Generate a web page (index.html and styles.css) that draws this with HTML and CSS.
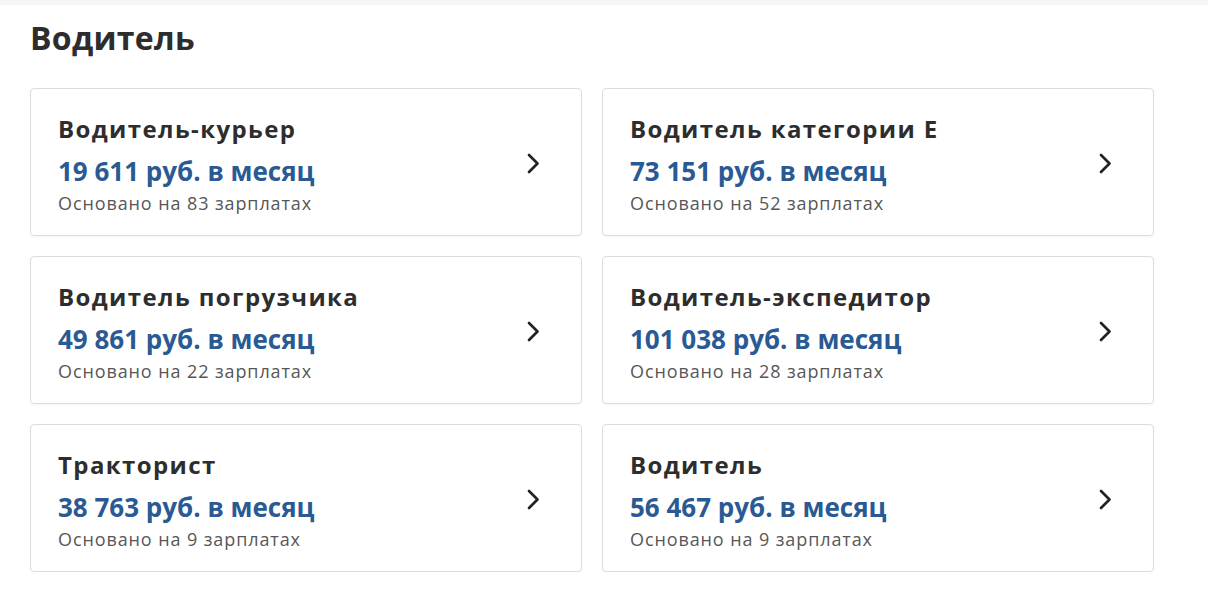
FILE: index.html
```html
<!DOCTYPE html>
<html lang="ru">
<head>
    <meta charset="UTF-8">
    <meta name="viewport" content="width=device-width, initial-scale=1.0">
    <title>Водитель</title>
    <link rel="stylesheet" href="styles.css">
</head>
<body>
    <div class="topbar"></div>
    <section class="seccion">
        <h2>Водитель</h2>
        <div class="tarjetas">
            <a class="tarjeta" href="#">
                <div class="info">
                    <h3>Водитель-курьер</h3>
                    <p class="salario">19 611 руб. в месяц</p>
                    <p class="base">Основано на 83 зарплатах</p>
                </div>
                <svg class="flecha" width="15" height="22" viewBox="0 0 15 22"><path d="M3 2 L11.5 10.5 L3 19" fill="none" stroke="#222" stroke-width="2.7" stroke-linecap="round" stroke-linejoin="round"/></svg>
            </a>
            <a class="tarjeta" href="#">
                <div class="info">
                    <h3>Водитель категории Е</h3>
                    <p class="salario">73 151 руб. в месяц</p>
                    <p class="base">Основано на 52 зарплатах</p>
                </div>
                <svg class="flecha" width="15" height="22" viewBox="0 0 15 22"><path d="M3 2 L11.5 10.5 L3 19" fill="none" stroke="#222" stroke-width="2.7" stroke-linecap="round" stroke-linejoin="round"/></svg>
            </a>
            <a class="tarjeta" href="#">
                <div class="info">
                    <h3>Водитель погрузчика</h3>
                    <p class="salario">49 861 руб. в месяц</p>
                    <p class="base">Основано на 22 зарплатах</p>
                </div>
                <svg class="flecha" width="15" height="22" viewBox="0 0 15 22"><path d="M3 2 L11.5 10.5 L3 19" fill="none" stroke="#222" stroke-width="2.7" stroke-linecap="round" stroke-linejoin="round"/></svg>
            </a>
            <a class="tarjeta" href="#">
                <div class="info">
                    <h3>Водитель-экспедитор</h3>
                    <p class="salario">101 038 руб. в месяц</p>
                    <p class="base">Основано на 28 зарплатах</p>
                </div>
                <svg class="flecha" width="15" height="22" viewBox="0 0 15 22"><path d="M3 2 L11.5 10.5 L3 19" fill="none" stroke="#222" stroke-width="2.7" stroke-linecap="round" stroke-linejoin="round"/></svg>
            </a>
            <a class="tarjeta" href="#">
                <div class="info">
                    <h3>Тракторист</h3>
                    <p class="salario">38 763 руб. в месяц</p>
                    <p class="base">Основано на 9 зарплатах</p>
                </div>
                <svg class="flecha" width="15" height="22" viewBox="0 0 15 22"><path d="M3 2 L11.5 10.5 L3 19" fill="none" stroke="#222" stroke-width="2.7" stroke-linecap="round" stroke-linejoin="round"/></svg>
            </a>
            <a class="tarjeta" href="#">
                <div class="info">
                    <h3>Водитель</h3>
                    <p class="salario">56 467 руб. в месяц</p>
                    <p class="base">Основано на 9 зарплатах</p>
                </div>
                <svg class="flecha" width="15" height="22" viewBox="0 0 15 22"><path d="M3 2 L11.5 10.5 L3 19" fill="none" stroke="#222" stroke-width="2.7" stroke-linecap="round" stroke-linejoin="round"/></svg>
            </a>
        </div>
    </section>
</body>
</html>
```

FILE: styles.css
```css
body {
    font-family: "Open Sans", Arial, sans-serif;
    margin: 0;
    padding: 0;
    background-color: #fff;
    color: #2d2d2d;
}
.topbar {
    height: 5px;
    background-color: #f6f6f6;
}
.seccion {
    padding: 11px 54px 0 30px;
}
.seccion h2 {
    margin: 0 0 28px 0;
    font-size: 32px;
    line-height: 44px;
    font-weight: 700;
    letter-spacing: 0.3px;
    color: #2d2d2d;
}
.tarjetas {
    display: grid;
    grid-template-columns: 1fr 1fr;
    gap: 20px;
}
.tarjeta {
    display: flex;
    align-items: center;
    justify-content: space-between;
    height: 148px;
    box-sizing: border-box;
    padding: 3px 40px 0 27px;
    border: 1px solid #dcdcdc;
    border-radius: 4px;
    box-shadow: 0 1px 2px rgba(0,0,0,0.04);
    text-decoration: none;
    color: inherit;
}
.tarjeta h3 {
    margin: 0;
    font-size: 24px;
    line-height: 32px;
    font-weight: 700;
    letter-spacing: 1.4px;
    color: #2d2d2d;
}
.salario {
    margin: 8px 0 0 0;
    font-size: 26px;
    line-height: 36px;
    font-weight: 700;
    color: #2a5a93;
}
.base {
    margin: 2px 0 0 0;
    font-size: 18px;
    line-height: 24px;
    letter-spacing: 0.9px;
    color: #575757;
}
.flecha {
    flex-shrink: 0;
}
```
